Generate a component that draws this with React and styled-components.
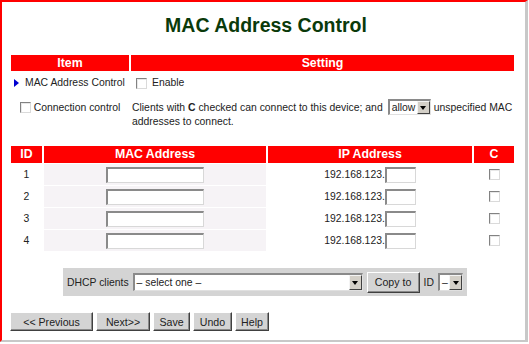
import styled, { createGlobalStyle } from "styled-components";

// *** global
const GlobalStyle = createGlobalStyle`
  html, body {
    margin: 0;
    padding: 0;
    background: #fff;
  }
  body {
    font-family: "Liberation Sans", Arial, sans-serif;
    font-size: 10.4px;
    color: #222;
  }
`;

// *** styled components
const Frame = styled.div`
  box-sizing: border-box;
  width: 528px;
  height: 342px;
  border: 2px solid #ff0000;
  border-right: 3px solid #c8c8c8;
  border-bottom: 2px solid #c8c8c8;
  padding: 12px 11px 0 9px;
`;

const Title = styled.h1`
  margin: 0;
  padding-left: 7px;
  text-align: center;
  font-size: 19.5px;
  line-height: 22px;
  font-weight: bold;
  color: #0a3a0a;
`;

const Grid = styled.div`
  display: grid;
  grid-template-columns: ${(props) => props.$cols};
  column-gap: 2px;
  row-gap: ${(props) => props.$rowGap || "2px"};
  margin-top: ${(props) => props.$top};
`;

const HeadCell = styled.div`
  height: ${(props) => props.$h || "16px"};
  line-height: ${(props) => props.$h || "16px"};
  background: #ff0000;
  color: #fff;
  font-weight: bold;
  font-size: 12.3px;
  text-align: center;
`;

const ItemCell = styled.div`
  display: flex;
  align-items: ${(props) => (props.$top ? "flex-start" : "center")};
  justify-content: ${(props) => (props.$center ? "center" : "flex-start")};
  gap: ${(props) => props.$gap || "6px"};
  min-height: 20px;
  padding: ${(props) => props.$pad || "0 0 0 3px"};
  line-height: 14px;
  white-space: nowrap;
`;

const SettingText = styled.div`
  padding: 6px 0 0 1px;
  line-height: 14px;
  height: 29px;
`;

const Line = styled.div`
  white-space: nowrap;
`;

const Arrow = styled.span`
  width: 0;
  height: 0;
  border-left: 5px solid #0000d0;
  border-top: 4px solid transparent;
  border-bottom: 4px solid transparent;
`;

const Check = styled.span`
  display: inline-block;
  box-sizing: border-box;
  width: 11px;
  height: 11px;
  margin-top: ${(props) => props.$mt || "0"};
  background: #fff;
  border: 1px solid;
  border-color: #828282 #dadada #dadada #828282;
  box-shadow: inset 1px 1px 0 #e8e8e8;
  vertical-align: middle;
`;

const Cell = styled.div`
  display: flex;
  align-items: center;
  justify-content: center;
  height: 21px;
  background: ${(props) => props.$bg || "#fff"};
`;

const TextBox = styled.span`
  display: inline-block;
  box-sizing: border-box;
  width: ${(props) => props.$w};
  height: 16px;
  background: #fff;
  border-top: 2px solid #8a8a8a;
  border-left: 2px solid #8a8a8a;
  border-right: 1px solid #d8d8d8;
  border-bottom: 1px solid #d8d8d8;
`;

const SelectBox = styled.span`
  display: inline-flex;
  align-items: stretch;
  box-sizing: border-box;
  width: ${(props) => props.$w};
  height: ${(props) => props.$h};
  margin: ${(props) => props.$m || "0"};
  vertical-align: middle;
  background: #fff;
  border-top: 2px solid #8a8a8a;
  border-left: 2px solid #8a8a8a;
  border-right: 1px solid #e0e0e0;
  border-bottom: 1px solid #e0e0e0;
`;

const SelectValue = styled.span`
  flex: 1;
  padding-left: 2px;
  line-height: ${(props) => props.$lh};
  overflow: hidden;
  white-space: nowrap;
`;

const SelectButton = styled.span`
  display: flex;
  align-items: center;
  justify-content: center;
  box-sizing: border-box;
  width: 13px;
  background: #d4d0c8;
  border: 1px solid;
  border-color: #f4f4f4 #404040 #404040 #f4f4f4;

  &::after {
    content: "";
    width: 0;
    height: 0;
    border-top: 4px solid #000;
    border-left: 3.5px solid transparent;
    border-right: 3.5px solid transparent;
  }
`;

const DhcpWrap = styled.div`
  margin: 17px 0 0 52px;
  width: 404px;
  height: 28px;
  display: flex;
  align-items: center;
  gap: 4px;
  padding-left: 4px;
  box-sizing: border-box;
  background: #d4d4d4;
`;

const Button = styled.button`
  box-sizing: border-box;
  width: ${(props) => props.$w};
  height: ${(props) => props.$h || "19px"};
  padding: 0;
  font-family: "Liberation Sans", Arial, sans-serif;
  font-size: 10.6px;
  color: #222;
  background: #d4d4d4;
  border: 1px solid;
  border-color: #fff #404040 #404040 #fff;
  box-shadow: inset -1px -1px 0 #8a8a8a;
  border-radius: 0;
`;

const ButtonRow = styled.div`
  display: flex;
  gap: 3px;
  margin: 16px 0 0 -1px;
`;

// *** components
const Select = ({ value, w, h, m }) => (
  <SelectBox $w={w} $h={h} $m={m}>
    <SelectValue $lh={`${parseInt(h, 10) - 3}px`}>{value}</SelectValue>
    <SelectButton />
  </SelectBox>
);

const Row = ({ id }) => (
  <>
    <Cell>{id}</Cell>
    <Cell $bg="#f6f3f6">
      <TextBox $w="98px" />
    </Cell>
    <Cell>
      <span>192.168.123.</span>
      <TextBox $w="31px" />
    </Cell>
    <Cell>
      <Check />
    </Cell>
  </>
);

const rows = [1, 2, 3, 4];

const App = () => {
  return (
    <>
      <GlobalStyle />
      <Frame>
        <Title>MAC Address Control</Title>

        <Grid $cols="118px 1fr" $top="19px">
          <HeadCell>Item</HeadCell>
          <HeadCell>Setting</HeadCell>

          <ItemCell>
            <Arrow />
            <span>MAC Address Control</span>
          </ItemCell>
          <ItemCell $pad="0 0 0 5px" $gap="5px">
            <Check />
            <span>Enable</span>
          </ItemCell>

          <ItemCell $top $center $gap="3px" $pad="6px 0 0 0">
            <Check $mt="1px" />
            <span>Connection control</span>
          </ItemCell>
          <SettingText>
            <Line>
              Clients with <b>C</b> checked can connect to this device; and
              <Select value="allow" w="43px" h="16px" m="-2px 3px 0 5px" />
              unspecified MAC
            </Line>
            <Line>addresses to connect.</Line>
          </SettingText>
        </Grid>

        <Grid $cols="31px 222px 204px 1fr" $top="16px" $rowGap="1px">
          <HeadCell $h="17px">ID</HeadCell>
          <HeadCell $h="17px">MAC Address</HeadCell>
          <HeadCell $h="17px">IP Address</HeadCell>
          <HeadCell $h="17px">C</HeadCell>
          {rows.map((id) => (
            <Row key={id} id={id} />
          ))}
        </Grid>

        <DhcpWrap>
          <span>DHCP clients</span>
          <Select value="– select one –" w="230px" h="18px" />
          <Button $w="53px" $h="21px">
            Copy to
          </Button>
          <span>ID</span>
          <Select value="–" w="25px" h="18px" />
        </DhcpWrap>

        <ButtonRow>
          <Button $w="83px">&lt;&lt; Previous</Button>
          <Button $w="54px">Next&gt;&gt;</Button>
          <Button $w="37px">Save</Button>
          <Button $w="39px">Undo</Button>
          <Button $w="34px">Help</Button>
        </ButtonRow>
      </Frame>
    </>
  );
};

export default App;
